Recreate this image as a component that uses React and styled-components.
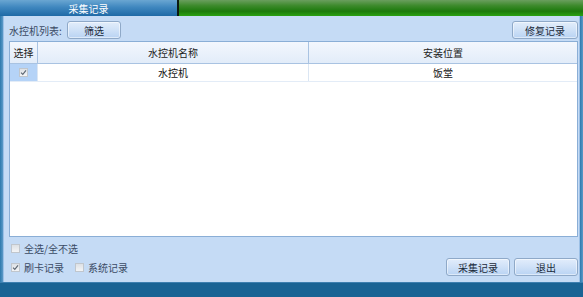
import React from "react";
import styled, { createGlobalStyle } from "styled-components";

const Global = createGlobalStyle`
  html, body { margin: 0; padding: 0; background: #1a6394; }
  body { font-family: "Noto Sans CJK SC", "Noto Sans", sans-serif; }
`;

const Window = styled.div`
  width: 583px;
  height: 297px;
  display: flex;
  flex-direction: column;
  overflow: hidden;
  font-size: 10px;
  color: #1b2a3a;
  white-space: nowrap;
`;

const TopBar = styled.div`
  height: 16px;
  display: flex;
  flex-shrink: 0;
`;

const Tab = styled.div`
  width: 177px;
  display: flex;
  align-items: center;
  justify-content: center;
  color: #fff;
  font-size: 10px;
  background: linear-gradient(#6aa6d2 0%, #3f87bf 45%, #1f6aa6 100%);
`;

const TabDivider = styled.div`
  width: 2px;
  background: #0c1a10;
`;

const GreenFill = styled.div`
  flex: 1;
  background: linear-gradient(#6a9e5e 0%, #3d8a2c 35%, #1c7a0c 70%, #2aa012 100%);
`;

const Body = styled.div`
  flex: 1;
  display: flex;
`;

const Edge = styled.div`
  width: ${(p) => p.$w}px;
  background: linear-gradient(90deg, #2d79ad, #5c9ac8);
  border-${(p) => p.$side}: 1px solid #9cc0e6;
`;

const Panel = styled.div`
  flex: 1;
  background: #c5dbf5;
  display: flex;
  flex-direction: column;
  padding: 5px 1px 8px 5px;
`;

const Toolbar = styled.div`
  display: flex;
  align-items: center;
  height: 18px;
`;

const Label = styled.span`
  color: #3a4a64;
  width: 58px;
`;

const Button = styled.button`
  font-family: inherit;
  font-size: 10px;
  color: #1b2a3a;
  width: ${(p) => p.$w || 54}px;
  height: 18px;
  padding: 0;
  border: 1px solid #8fa9c8;
  border-radius: 3px;
  background: linear-gradient(#e2edfb 0%, #cfe1f7 50%, #b9d3f3 100%);
  box-shadow: inset 0 0 0 1px rgba(255,255,255,0.5);
  display: flex;
  align-items: center;
  justify-content: center;
`;

const Spacer = styled.div`
  flex: 1;
`;

const Table = styled.div`
  margin-top: 2px;
  flex: 1;
  background: #fff;
  border: 1px solid #8aaed6;
  display: flex;
  flex-direction: column;
`;

const HeaderRow = styled.div`
  display: grid;
  grid-template-columns: 28px 271px 1fr;
  height: 21px;
  background: linear-gradient(#f3f7fd, #e2ecf9);
  border-bottom: 1px solid #a9c3e2;
`;

const HeadCell = styled.div`
  display: flex;
  align-items: center;
  justify-content: center;
  border-right: ${(p) => (p.$last ? "none" : "1px solid #a9c3e2")};
  color: #222;
`;

const Row = styled.div`
  display: grid;
  grid-template-columns: 28px 271px 1fr;
  height: 17px;
  border-bottom: 1px solid #e3ecf7;
`;

const Cell = styled.div`
  display: flex;
  align-items: center;
  justify-content: center;
  background: ${(p) => (p.$selected ? "#b5d3f7" : "#fff")};
  border-right: ${(p) => (p.$last ? "none" : "1px solid #dbe6f3")};
  color: #111;
`;

const Footer = styled.div`
  display: flex;
  flex-direction: column;
  padding: 4px 0 0 2px;
  gap: 5px;
`;

const FooterLine = styled.div`
  display: flex;
  align-items: center;
  height: 14px;
`;

const Check = styled.label`
  display: inline-flex;
  align-items: center;
  gap: 4px;
  color: #3a4a64;
  margin-right: ${(p) => p.$mr || 0}px;
`;

const Box = styled.span`
  width: 7px;
  height: 7px;
  border: 1px solid #c0c6cd;
  background: linear-gradient(#dde1e5, #f3f4f6);
  display: inline-flex;
  align-items: center;
  justify-content: center;
`;

const ButtonGroup = styled.div`
  display: flex;
  gap: 4px;
`;

const BottomBand = styled.div`
  height: 14px;
  flex-shrink: 0;
  background: #1a6394;
  border-top: 1px solid #3d7fb0;
`;

const Tick = () => (
  <svg width="7" height="7" viewBox="0 0 7 7">
    <path d="M1 3.6 L2.8 5.4 L6 1.4" fill="none" stroke="#5c6672" strokeWidth="1.1" />
  </svg>
);

function CheckBox({ checked, label, mr }) {
  return (
    <Check $mr={mr}>
      <Box>{checked && <Tick />}</Box>
      {label}
    </Check>
  );
}

export default function App() {
  return (
    <>
      <Global />
      <Window>
        <TopBar>
          <Tab>采集记录</Tab>
          <TabDivider />
          <GreenFill />
        </TopBar>
        <Body>
          <Edge $w={3} $side="right" />
          <Panel>
            <Toolbar>
              <Label>水控机列表:</Label>
              <Button $w={54}>筛选</Button>
              <Spacer />
              <Button $w={66}>修复记录</Button>
            </Toolbar>
            <Table>
              <HeaderRow>
                <HeadCell>选择</HeadCell>
                <HeadCell>水控机名称</HeadCell>
                <HeadCell $last>安装位置</HeadCell>
              </HeaderRow>
              <Row>
                <Cell $selected>
                  <Box>
                    <Tick />
                  </Box>
                </Cell>
                <Cell>水控机</Cell>
                <Cell $last>饭堂</Cell>
              </Row>
            </Table>
            <Footer>
              <FooterLine>
                <CheckBox label="全选/全不选" />
              </FooterLine>
              <FooterLine>
                <CheckBox checked label="刷卡记录" mr={11} />
                <CheckBox label="系统记录" />
                <Spacer />
                <ButtonGroup>
                  <Button $w={64}>采集记录</Button>
                  <Button $w={64}>退出</Button>
                </ButtonGroup>
              </FooterLine>
            </Footer>
          </Panel>
          <Edge $w={3} $side="left" />
        </Body>
        <BottomBand />
      </Window>
    </>
  );
}
